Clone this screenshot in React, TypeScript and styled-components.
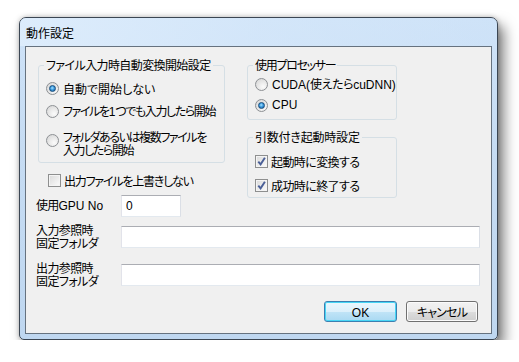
import React from "react";
import styled, { createGlobalStyle } from "styled-components";

const Global = createGlobalStyle`
  html, body { margin: 0; padding: 0; background: #ffffff; }
  body {
    font-family: "Noto Sans CJK JP", sans-serif;
    font-size: 12px;
    font-feature-settings: "palt" 1;
    font-kerning: normal;
    color: #000;
  }
  * { box-sizing: border-box; }
`;

const Latin = styled.span`
  font-family: "Liberation Sans Narrow", "Liberation Sans", sans-serif;
  letter-spacing: 0;
`;

const Window = styled.div`
  margin: 17px 0 0 19px;
  width: 479px;
  height: 323px;
  border: 1px solid #3b4653;
  border-radius: 7px 7px 5px 5px;
  background: linear-gradient(180deg, #cfe3f8 0%, #c6dcf3 40%, #bfd7f0 100%);
  box-shadow: 6px 8px 13px rgba(0, 0, 0, 0.5), 0 0 5px rgba(0, 0, 0, 0.25);
  padding: 0 5px 5px;
  display: flex;
  flex-direction: column;
`;

const TitleBar = styled.div`
  height: 28px;
  display: flex;
  align-items: center;
  margin: 0 -5px;
  padding-left: 6px;
  font-size: 12px;
  font-feature-settings: normal;
  border-radius: 6px 6px 0 0;
  background: linear-gradient(90deg, rgba(222, 237, 252, 0.9) 0%, rgba(214, 232, 250, 0.6) 50%, rgba(205, 226, 248, 0.4) 100%);
`;

const Client = styled.div`
  flex: 1;
  border: 1px solid #66727f;
  background: #f0f0f0;
  padding: 11px 11px 0 10px;
  display: flex;
  flex-direction: column;
`;

const TopGrid = styled.div`
  display: grid;
  grid-template-columns: 189px 150px;
  column-gap: 22px;
  align-items: start;
`;

const Column = styled.div`
  display: flex;
  flex-direction: column;
`;

const Group = styled.fieldset<{ $top?: number; $pt: number; $pb: number; $ml?: number }>`
  margin: ${(p) => p.$top ?? 0}px 0 0 ${(p) => p.$ml ?? 0}px;
  padding: ${(p) => p.$pt}px 6px ${(p) => p.$pb}px 7px;
  border: 1px solid #d5dfe5;
  border-radius: 3px;
  min-width: 0;
  display: flex;
  flex-direction: column;
`;

const Legend = styled.legend<{ $ls?: number }>`
  line-height: 14px;
  padding: 0 2px;
  margin-left: -2px;
  white-space: nowrap;
  letter-spacing: ${(p) => p.$ls ?? 0}px;
`;

const Item = styled.label<{ $h?: number; $mt?: number; $ml?: number; $ls?: number }>`
  display: flex;
  align-items: center;
  gap: 4px;
  height: ${(p) => (p.$h ? `${p.$h}px` : "auto")};
  margin-top: ${(p) => p.$mt ?? 0}px;
  margin-left: ${(p) => p.$ml ?? 0}px;
  line-height: 13px;
  white-space: nowrap;
  letter-spacing: ${(p) => p.$ls ?? 0}px;
`;

const MultiItem = styled(Item)`
  align-items: flex-start;
`;

const RadioMark = styled.span<{ $on?: boolean; $offset?: number }>`
  position: relative;
  flex: none;
  width: 13px;
  height: 13px;
  border-radius: 50%;
  border: 1px solid #8d9094;
  margin-top: ${(p) => p.$offset ?? 0}px;
  background: radial-gradient(circle at 65% 70%, #fbfbfb 0%, #e9e9e9 45%, #d2d2d2 100%);
  &::after {
    content: "";
    display: ${(p) => (p.$on ? "block" : "none")};
    position: absolute;
    inset: 2px;
    border-radius: 50%;
    border: 1px solid #174d7d;
    background: radial-gradient(circle at 45% 40%, #a9e4ff 0%, #3c9be0 45%, #1b5a94 100%);
  }
`;

const CheckBox = styled.span`
  flex: none;
  width: 13px;
  height: 13px;
  border: 1px solid #8e8f8f;
  box-shadow: inset 0 0 0 1px #f4f4f4;
  background: linear-gradient(135deg, #d9d9d9 0%, #eeeeee 60%, #fbfbfb 100%);
  display: flex;
  align-items: center;
  justify-content: center;
`;

const Check = ({ on }: { on: boolean }) => (
  <CheckBox>
    {on && (
      <svg width="11" height="11" viewBox="0 0 11 11">
        <path d="M2.3 5.6 L4.6 8.3 L8.9 1.8" fill="none" stroke="#4a5f97" strokeWidth="1.9" strokeLinejoin="miter" />
      </svg>
    )}
  </CheckBox>
);

const CheckItem = styled(Item)`
  gap: 3px;
`;

const FieldRow = styled.div<{ $mt: number }>`
  display: flex;
  align-items: center;
  margin-top: ${(p) => p.$mt}px;
`;

const FieldLabel = styled.div<{ $ls?: number }>`
  width: 85px;
  flex: none;
  line-height: 12.5px;
  letter-spacing: ${(p) => p.$ls ?? 0}px;
`;

const TextBox = styled.input<{ $w?: number }>`
  height: 22px;
  width: ${(p) => (p.$w ? `${p.$w}px` : "auto")};
  flex: ${(p) => (p.$w ? "none" : "1")};
  min-width: 0;
  border: 1px solid;
  border-color: #abadb3 #dbdfe6 #e3e9ef #e2e3ea;
  background: #fff;
  font-family: "Liberation Sans Narrow", "Liberation Sans", sans-serif;
  font-size: 12px;
  padding: 0 4px;
  outline: none;
`;

const Buttons = styled.div`
  display: flex;
  justify-content: flex-end;
  gap: 9px;
  margin: 14px 2px 0 0;
`;

const Button = styled.button<{ $primary?: boolean; $w: number }>`
  width: ${(p) => p.$w}px;
  height: 21px;
  font: inherit;
  letter-spacing: -0.8px;
  color: #000;
  border-radius: 3px;
  padding: 0;
  border: 1px solid ${(p) => (p.$primary ? "#3c7fb1" : "#707070")};
  box-shadow: inset 0 0 0 1px ${(p) => (p.$primary ? "#48d6f5" : "#fbfbfb")};
  background: ${(p) =>
    p.$primary
      ? "linear-gradient(180deg, #ecf7fd 0%, #dcf0fb 50%, #c1e4f7 51%, #a9d9f2 100%)"
      : "linear-gradient(180deg, #f2f2f2 0%, #ebebeb 50%, #dddddd 51%, #cfcfcf 100%)"};
`;

export default function App() {
  return (
    <>
      <Global />
      <Window>
        <TitleBar>動作設定</TitleBar>
        <Client>
          <TopGrid>
            <Column>
              <Group $pt={5} $pb={6} $ml={2}>
                <Legend $ls={-0.6}>ファイル入力時自動変換開始設定</Legend>
                <Item $h={23}>
                  <RadioMark $on />
                  自動で開始しない
                </Item>
                <Item $h={23} $ls={-1.4}>
                  <RadioMark />
                  <span>
                    ファイルを<Latin>1</Latin>つでも入力したら開始
                  </span>
                </Item>
                <MultiItem $mt={7} $ls={-1.4}>
                  <RadioMark $offset={4} />
                  <span>
                    フォルダあるいは複数ファイルを
                    <br />
                    入力したら開始
                  </span>
                </MultiItem>
              </Group>
              <CheckItem $h={20} $mt={7} $ml={12} $ls={-1.2}>
                <Check on={false} />
                出力ファイルを上書きしない
              </CheckItem>
              <FieldRow $mt={5}>
                <FieldLabel $ls={-0.8}>
                  使用<Latin>GPU No</Latin>
                </FieldLabel>
                <TextBox $w={60} defaultValue="0" readOnly />
              </FieldRow>
            </Column>
            <Column>
              <Group $pt={2} $pb={3}>
                <Legend $ls={-1.3}>使用プロセッサー</Legend>
                <Item $h={21} $ls={-0.4}>
                  <RadioMark />
                  <span>
                    <Latin>CUDA(</Latin>使えたら<Latin>cuDNN)</Latin>
                  </span>
                </Item>
                <Item $h={21}>
                  <RadioMark $on />
                  <Latin>CPU</Latin>
                </Item>
              </Group>
              <Group $top={10} $pt={5} $pb={0}>
                <Legend $ls={-0.2}>引数付き起動時設定</Legend>
                <CheckItem $h={24} $ls={-0.6}>
                  <Check on />
                  起動時に変換する
                </CheckItem>
                <CheckItem $h={24} $ls={-0.6}>
                  <Check on />
                  成功時に終了する
                </CheckItem>
              </Group>
            </Column>
          </TopGrid>
          <FieldRow $mt={7}>
            <FieldLabel $ls={-0.6}>
              入力参照時
              <br />
              固定フォルダ
            </FieldLabel>
            <TextBox readOnly />
          </FieldRow>
          <FieldRow $mt={13}>
            <FieldLabel $ls={-0.6}>
              出力参照時
              <br />
              固定フォルダ
            </FieldLabel>
            <TextBox readOnly />
          </FieldRow>
          <Buttons>
            <Button $primary $w={73}>
              <Latin>OK</Latin>
            </Button>
            <Button $w={72}>キャンセル</Button>
          </Buttons>
        </Client>
      </Window>
    </>
  );
}
